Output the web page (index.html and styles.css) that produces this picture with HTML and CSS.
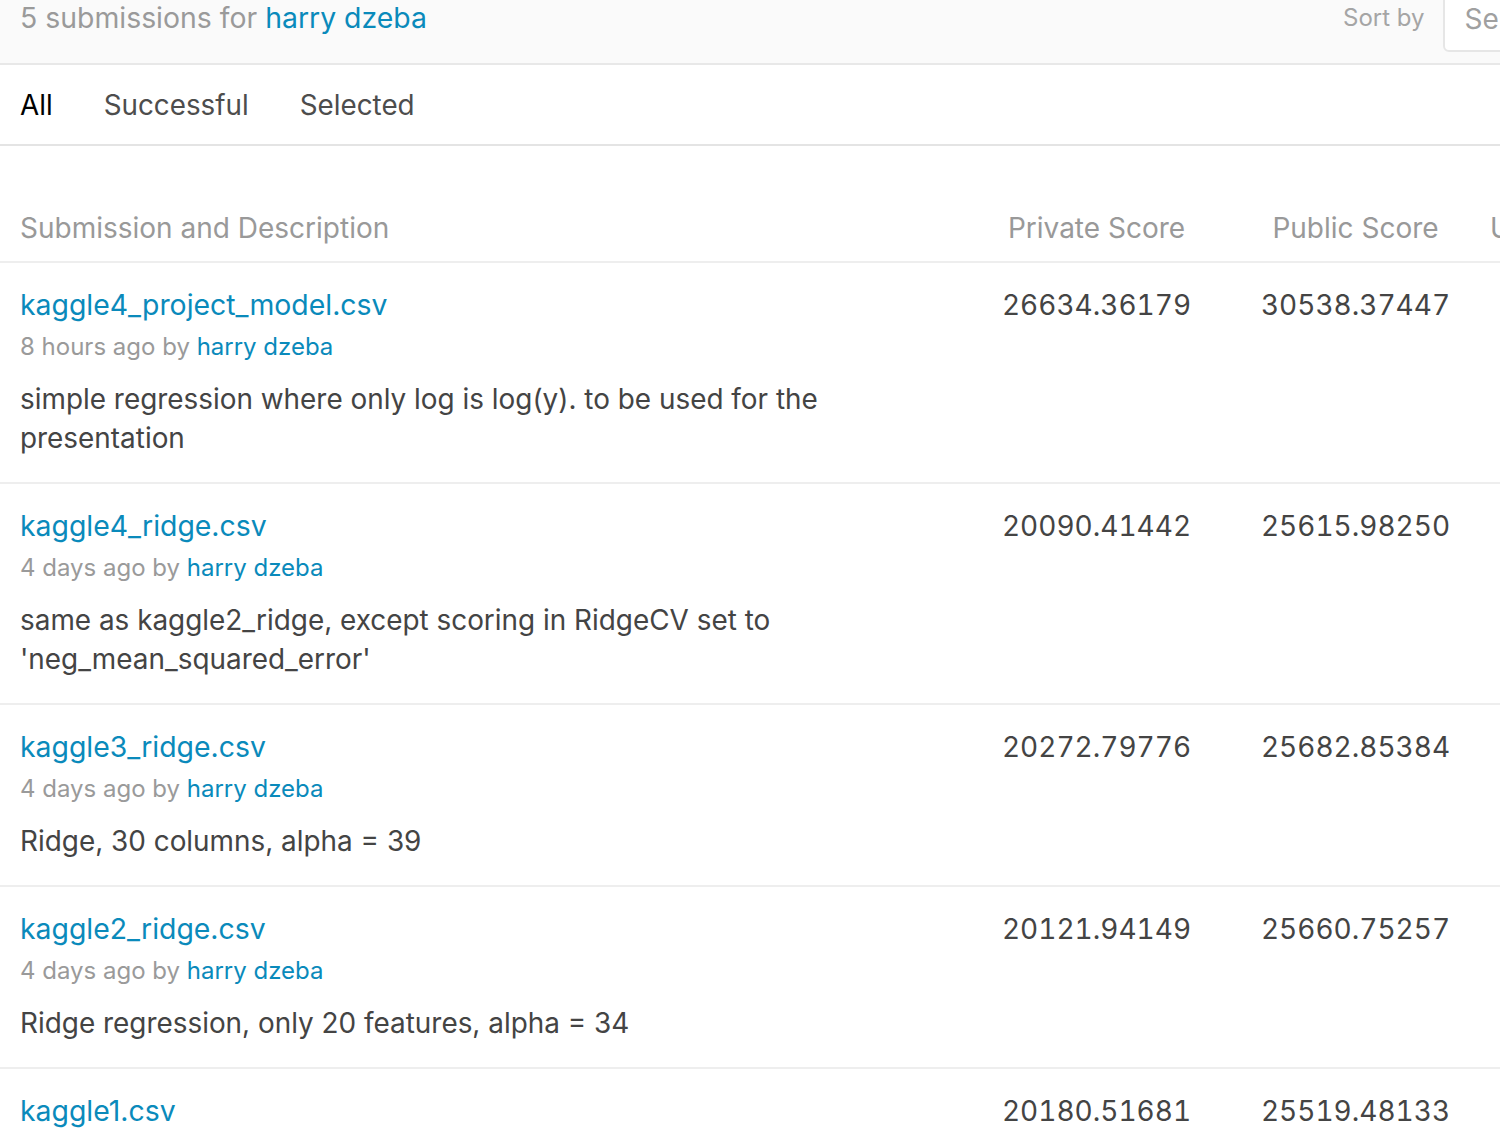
FILE: index.html
```html
<!DOCTYPE html>
<html>
<head>
<meta charset="utf-8">
<link rel="stylesheet" href="styles.css">
</head>
<body>
<div class="page">
  <header class="topbar">
    <div class="title"><span class="muted">5 submissions for</span> <a class="link" href="#">harry dzeba</a></div>
    <div class="sort">
      <span class="sort-label">Sort by</span>
      <div class="select">Select...</div>
    </div>
  </header>
  <nav class="tabs">
    <span class="tab active">All</span>
    <span class="tab">Successful</span>
    <span class="tab">Selected</span>
  </nav>
  <div class="thead">
    <div class="col-main">Submission and Description</div>
    <div class="col-score">Private Score</div>
    <div class="col-score">Public Score</div>
    <div class="col-use">Use for Final Score</div>
  </div>
  <div class="row">
    <div class="col-main">
      <a class="file link" href="#">kaggle4_project_model.csv</a>
      <div class="meta">8 hours ago by <a class="link" href="#">harry dzeba</a></div>
      <p class="desc">simple regression where only log is log(y). to be used for the presentation</p>
    </div>
    <div class="col-score score">26634.36179</div>
    <div class="col-score score">30538.37447</div>
    <div class="col-use"></div>
  </div>
  <div class="row">
    <div class="col-main">
      <a class="file link" href="#">kaggle4_ridge.csv</a>
      <div class="meta">4 days ago by <a class="link" href="#">harry dzeba</a></div>
      <p class="desc">same as kaggle2_ridge, except scoring in RidgeCV set to 'neg_mean_squared_error'</p>
    </div>
    <div class="col-score score">20090.41442</div>
    <div class="col-score score">25615.98250</div>
    <div class="col-use"></div>
  </div>
  <div class="row">
    <div class="col-main">
      <a class="file link" href="#">kaggle3_ridge.csv</a>
      <div class="meta">4 days ago by <a class="link" href="#">harry dzeba</a></div>
      <p class="desc">Ridge, 30 columns, alpha = 39</p>
    </div>
    <div class="col-score score">20272.79776</div>
    <div class="col-score score">25682.85384</div>
    <div class="col-use"></div>
  </div>
  <div class="row">
    <div class="col-main">
      <a class="file link" href="#">kaggle2_ridge.csv</a>
      <div class="meta">4 days ago by <a class="link" href="#">harry dzeba</a></div>
      <p class="desc">Ridge regression, only 20 features, alpha = 34</p>
    </div>
    <div class="col-score score">20121.94149</div>
    <div class="col-score score">25660.75257</div>
    <div class="col-use"></div>
  </div>
  <div class="row">
    <div class="col-main">
      <a class="file link" href="#">kaggle1.csv</a>
      <div class="meta">4 days ago by <a class="link" href="#">harry dzeba</a></div>
      <p class="desc">first submission</p>
    </div>
    <div class="col-score score">20180.51681</div>
    <div class="col-score score">25519.48133</div>
    <div class="col-use"></div>
  </div>
</div>
</body>
</html>
```

FILE: styles.css
```css
html, body {
  margin: 0;
  padding: 0;
  background: #fff;
  overflow: hidden;
}
body {
  font-family: Inter, "Noto Sans", sans-serif;
  color: #444;
  width: 1500px;
  height: 1138px;
}
.page {
  width: 1500px;
  overflow: hidden;
}
.link {
  color: #0a8abb;
  text-decoration: none;
}
.muted {
  color: #9a9a9a;
}
.topbar {
  height: 63px;
  background: #fafafa;
  border-bottom: 2px solid #e8e8e8;
  display: flex;
  align-items: flex-start;
  padding-left: 20px;
  overflow: hidden;
}
.title {
  flex: 1;
  font-size: 28.4px;
  line-height: 36px;
  white-space: nowrap;
}
.sort {
  display: flex;
  align-items: flex-start;
  gap: 18px;
  width: 157px;
  flex: none;
}
.sort-label {
  font-size: 24px;
  line-height: 36px;
  color: #a5a5a5;
  white-space: nowrap;
}
.select {
  width: 200px;
  height: 64px;
  margin-top: -12px;
  flex: none;
  box-sizing: border-box;
  background: #fff;
  border: 2px solid #e6e6e6;
  border-radius: 6px;
  padding: 11px 0 0 20px;
  font-size: 28px;
  line-height: 36px;
  color: #a0a0a0;
  white-space: nowrap;
}
.tabs {
  height: 81px;
  box-sizing: border-box;
  padding: 0 0 0 20px;
  border-bottom: 2px solid #e4e4e4;
  display: flex;
  align-items: center;
  gap: 51px;
}
.tab {
  font-size: 27.8px;
  line-height: 36px;
  color: #4d4d4d;
}
.tab.active {
  color: #000;
}
.thead {
  display: flex;
  padding: 64px 0 15px 20px;
  border-bottom: 2px solid #eeeeee;
  font-size: 28px;
  line-height: 36px;
  color: #999;
  white-space: nowrap;
}
.col-main {
  width: 947px;
  flex: none;
}
.col-score {
  width: 259px;
  flex: none;
  text-align: center;
  white-space: nowrap;
}
.col-use {
  flex: none;
  width: 200px;
  padding-left: 5px;
  white-space: nowrap;
}
.row {
  display: flex;
  padding: 24px 0 24px 20px;
  border-bottom: 2px solid #eeeeee;
}
.file {
  display: block;
  font-size: 28.4px;
  line-height: 36px;
}
.meta {
  margin-top: 8px;
  font-size: 24px;
  line-height: 32px;
  color: #9a9a9a;
}
.desc {
  margin: 17px 0 0 0;
  max-width: 880px;
  font-size: 27.9px;
  line-height: 39px;
  color: #444;
}
.score {
  font-size: 28px;
  line-height: 36px;
  color: #444;
  font-variant-numeric: tabular-nums;
}
```
